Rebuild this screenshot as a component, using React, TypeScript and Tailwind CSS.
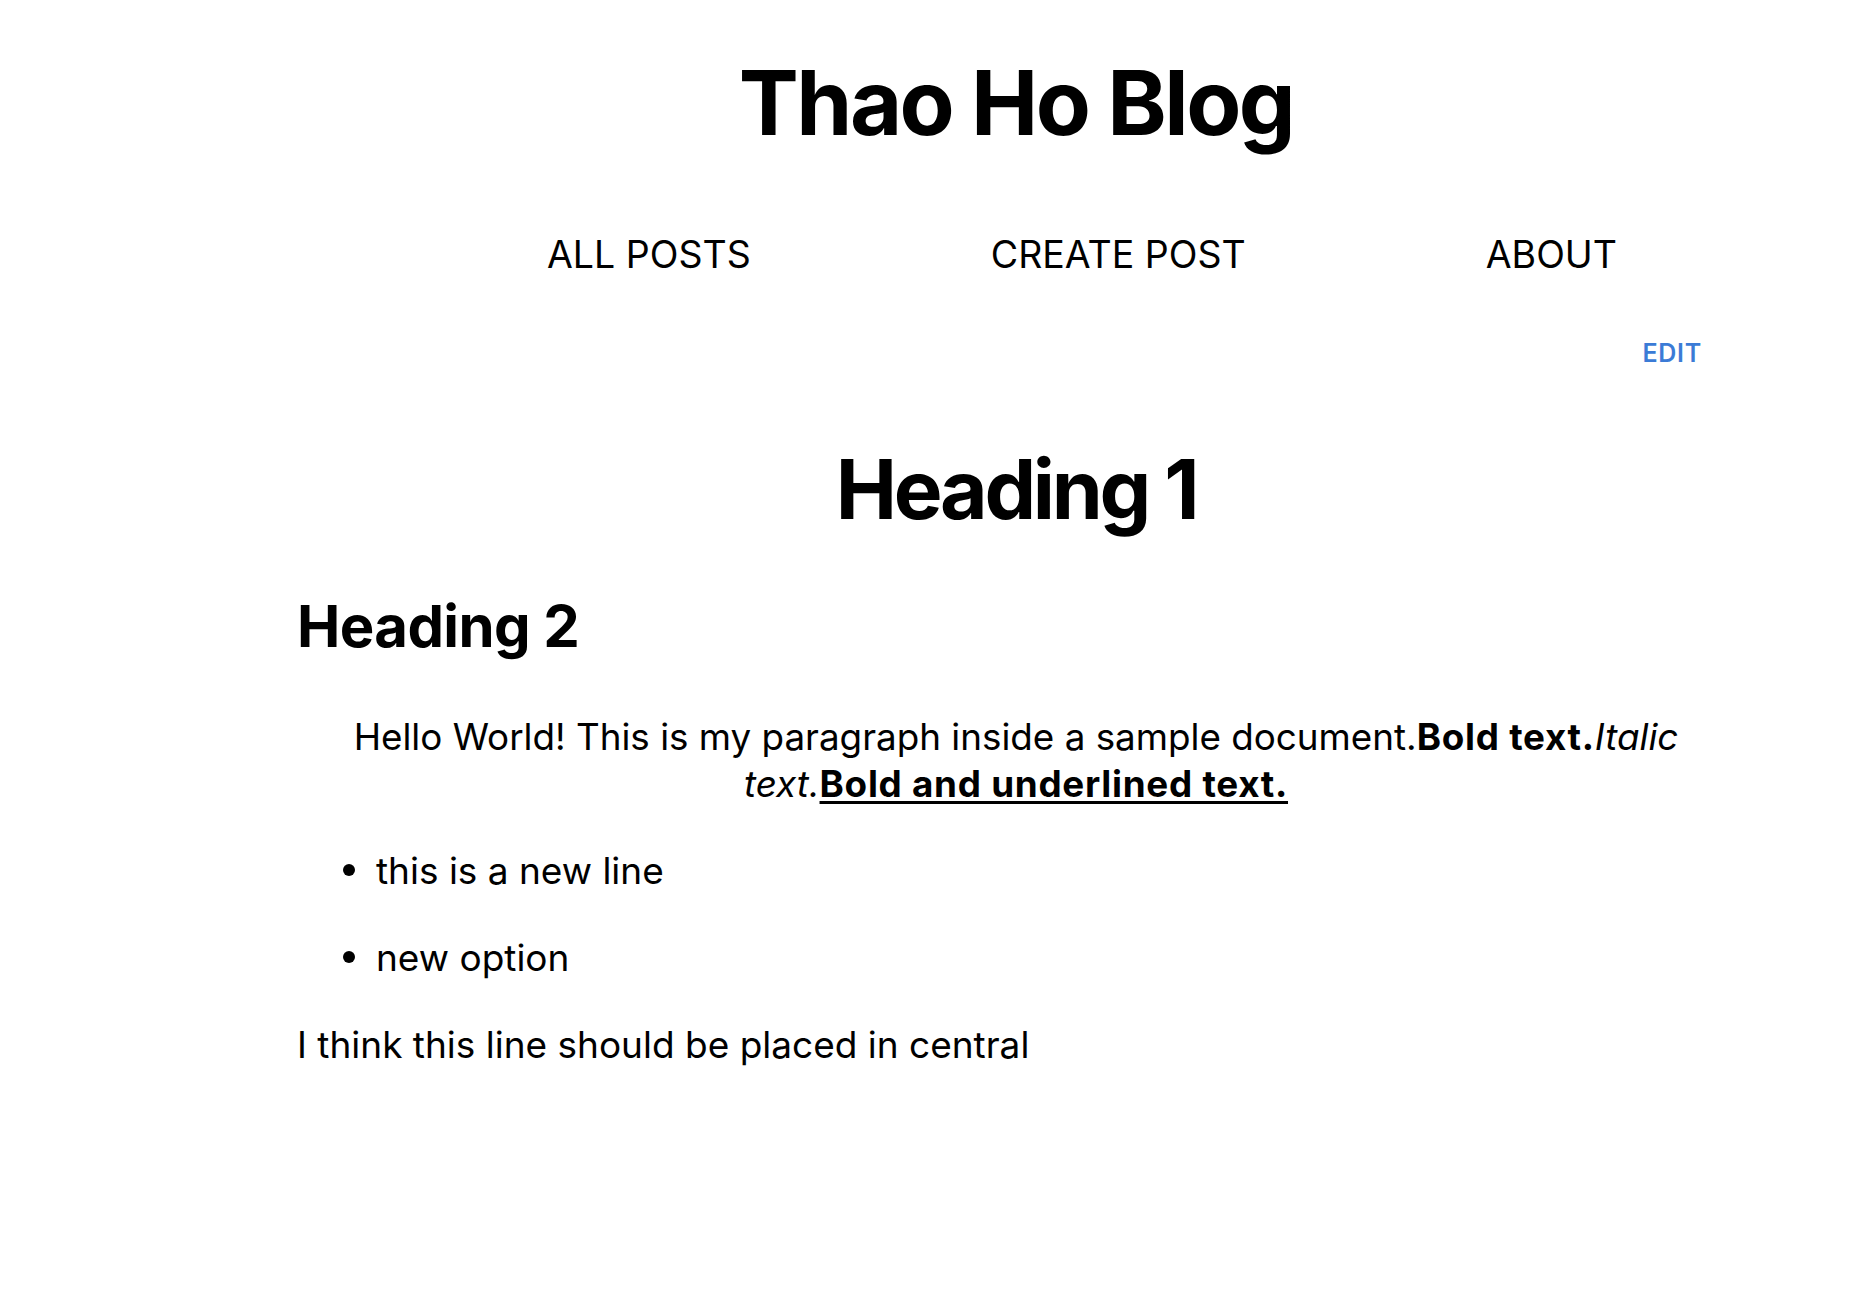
import React from "react";

export default function App() {
  return (
    <div className="min-h-screen bg-white text-black font-['Inter',sans-serif] pl-[297px] pr-[141px]">
      <h1 className="mt-[58px] text-center text-[90px] font-bold leading-none tracking-[-0.028em]">
        Thao Ho Blog
      </h1>
      <nav className="mt-[88px] flex pl-[250px] gap-[240px] text-[37.5px] leading-none">
        <a href="#" className="text-black">ALL POSTS</a>
        <a href="#" className="text-black">CREATE POST</a>
        <a href="#" className="text-black">ABOUT</a>
      </nav>
      <div className="mt-[67px] flex justify-end pr-[33px]">
        <button className="text-[25px] leading-none font-semibold tracking-[0.03em] text-[#3b7bd6]">
          EDIT
        </button>
      </div>
      <h2 className="mt-[83px] text-center text-[82px] font-bold leading-none tracking-[-0.04em]">
        Heading 1
      </h2>
      <h3 className="mt-[66px] text-[58px] font-bold leading-none tracking-[-0.01em]">
        Heading 2
      </h3>
      <p className="mt-[58px] text-center text-[36.8px] leading-[47px]">
        Hello World! This is my paragraph inside a sample document.
        <strong className="font-bold tracking-[0.02em]">Bold text.</strong>
        <em className="italic">Italic text.</em>
        <strong className="font-bold tracking-[0.02em] underline decoration-[3px] underline-offset-[4px]">
          Bold and underlined text.
        </strong>
      </p>
      <ul className="text-[37px] leading-[47px]">
        <li className="mt-[40px] flex items-center pl-[46px]">
          <span className="w-[12px] h-[12px] rounded-full bg-black mr-[21px]" />
          <span>this is a new line</span>
        </li>
        <li className="mt-[40px] flex items-center pl-[46px]">
          <span className="w-[12px] h-[12px] rounded-full bg-black mr-[21px]" />
          <span>new option</span>
        </li>
      </ul>
      <p className="mt-[40px] text-[37px] leading-[47px]">
        I think this line should be placed in central
      </p>
    </div>
  );
}
